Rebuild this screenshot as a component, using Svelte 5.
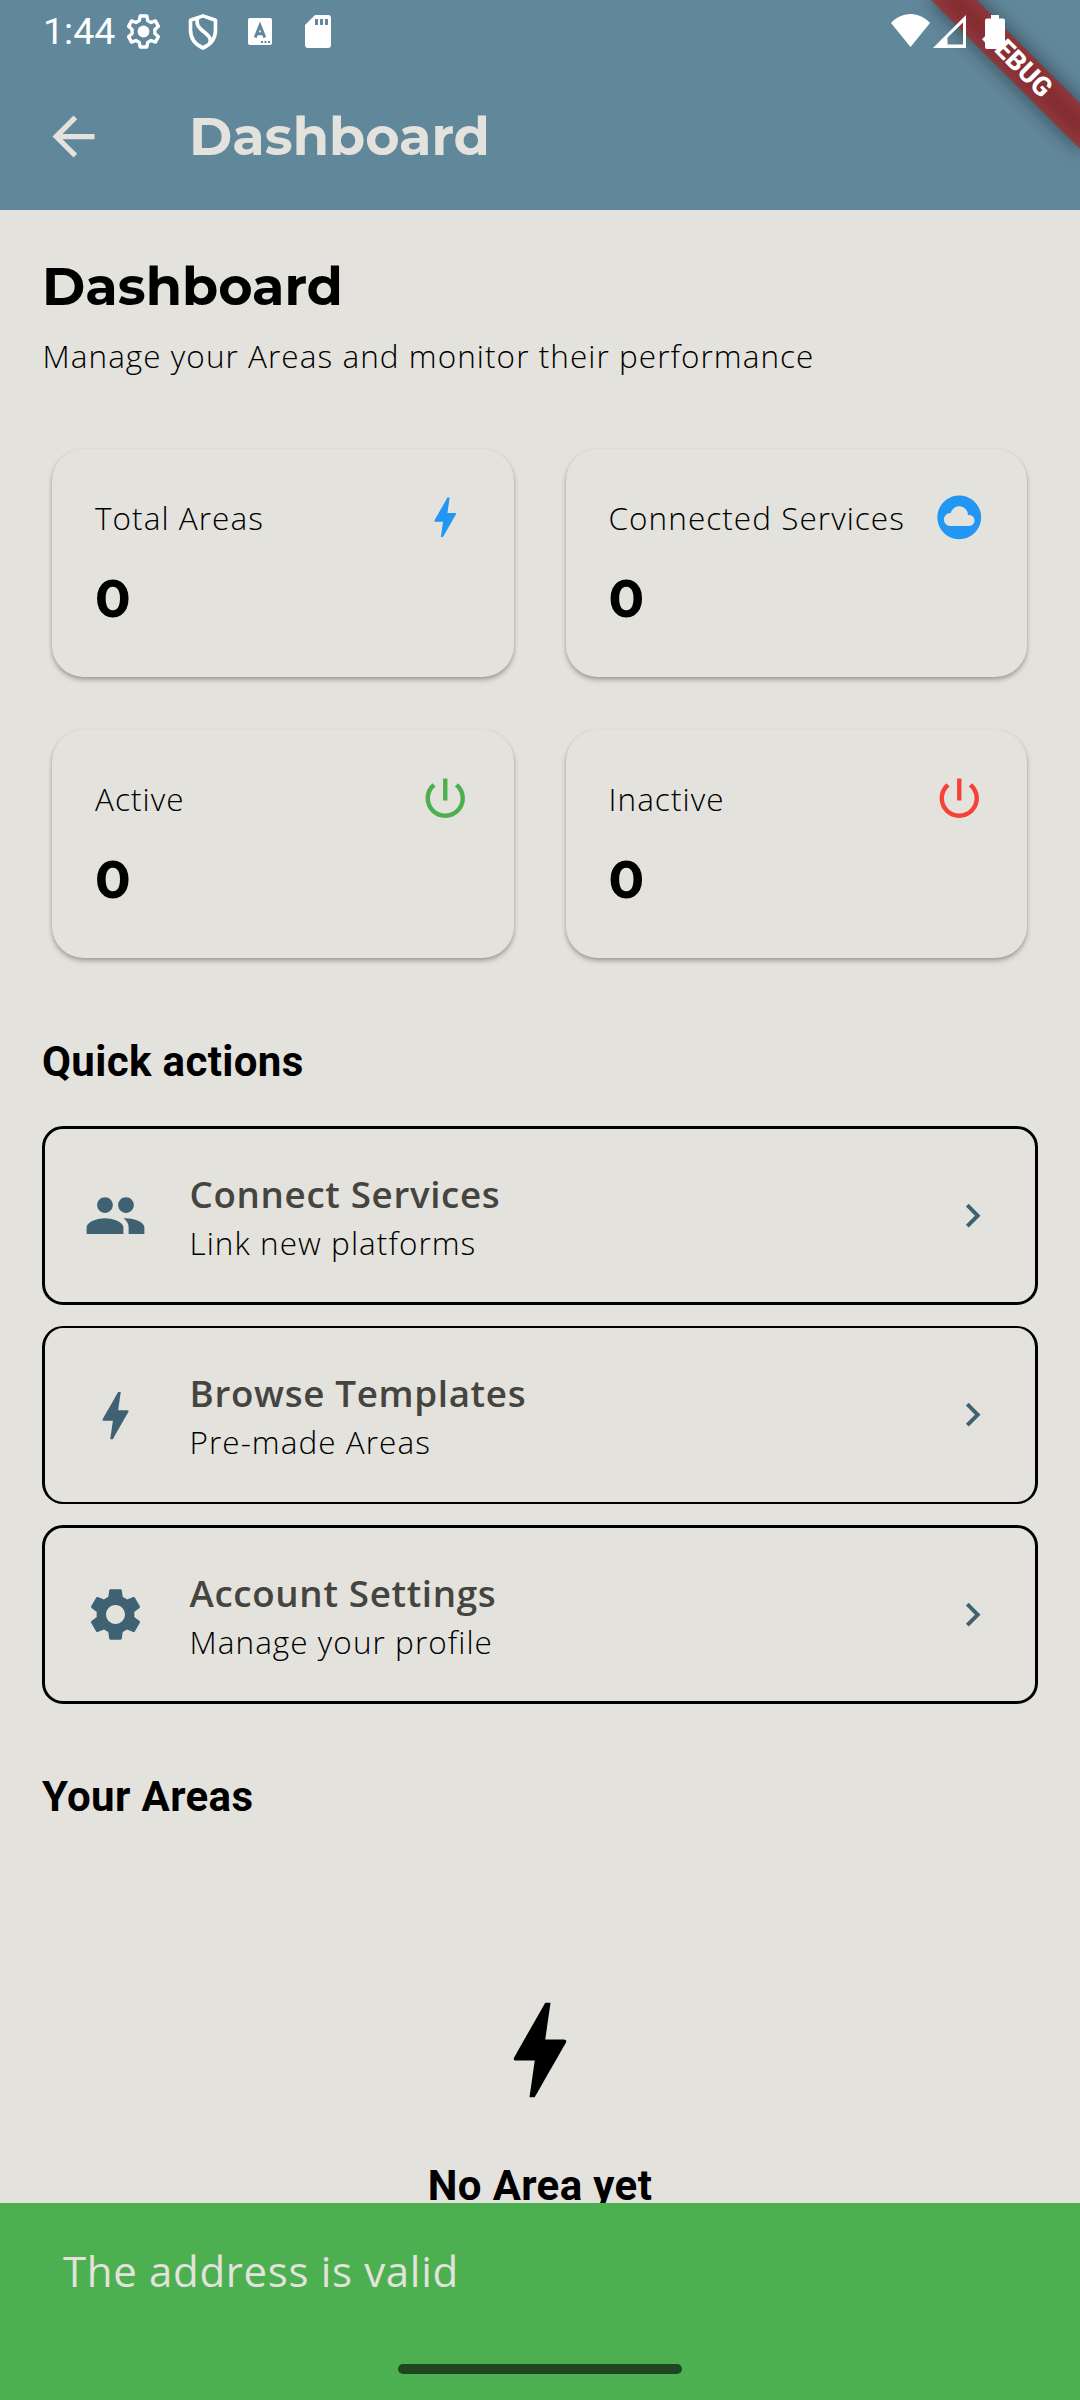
<script>
  const bolt =
    'M11 21h-1l1-7H7.5c-.58 0-.57-.32-.38-.66.19-.34.05-.08.07-.12C8.48 10.94 10.42 7.54 13 3h1l-1 7h3.5c.49 0 .56.33.47.51l-.07.15C12.96 17.55 11 21 11 21z';
  const cloud =
    'M12 2C6.48 2 2 6.48 2 12s4.48 10 10 10 10-4.480 10-10S17.52 2 12 2zm4.500 14H8c-1.660 0-3-1.340-3-3s1.340-3 3-3l.14.01C8.580 8.280 10.130 7 12 7c2.210 0 4 1.790 4 4h.5c1.380 0 2.500 1.120 2.500 2.500S17.880 16 16.500 16z';
  const power =
    'M13 3h-2v10h2V3zm4.830 2.170l-1.420 1.420C17.990 7.860 19 9.810 19 12c0 3.870-3.130 7-7 7s-7-3.130-7-7c0-2.190 1.010-4.140 2.580-5.420L6.170 5.170C4.230 6.820 3 9.260 3 12c0 4.970 4.030 9 9 9s9-4.030 9-9c0-2.740-1.230-5.180-3.170-6.830z';
  const people =
    'M16 11c1.660 0 2.990-1.340 2.990-3S17.660 5 16 5c-1.660 0-3 1.340-3 3s1.340 3 3 3zm-8 0c1.660 0 2.990-1.340 2.990-3S9.660 5 8 5C6.340 5 5 6.340 5 8s1.340 3 3 3zm0 2c-2.330 0-7 1.170-7 3.500V19h14v-2.500c0-2.330-4.670-3.500-7-3.500zm8 0c-.29 0-.62.02-.97.05 1.160.84 1.970 1.970 1.970 3.450V19h6v-2.500c0-2.330-4.670-3.500-7-3.500z';
  const gear =
    'M19.14 12.94c.04-.3.06-.61.06-.94 0-.32-.02-.64-.07-.94l2.030-1.580c.18-.14.23-.41.12-.61l-1.920-3.320c-.12-.22-.37-.29-.59-.22l-2.390.96c-.5-.38-1.030-.7-1.620-.94l-.36-2.540c-.04-.24-.24-.41-.48-.41h-3.840c-.24 0-.43.17-.47.41l-.36 2.540c-.59.24-1.130.57-1.620.94l-2.390-.96c-.22-.08-.47 0-.59.22L2.740 8.870c-.12.21-.08.47.12.61l2.030 1.580c-.05.3-.09.63-.09.94s.02.64.07.94l-2.030 1.580c-.18.14-.23.41-.12.61l1.920 3.320c.12.22.37.29.59.22l2.390-.96c.5.38 1.030.7 1.620.94l.36 2.540c.05.24.24.41.48.41h3.840c.24 0 .44-.17.47-.41l.36-2.540c.59-.24 1.130-.56 1.620-.94l2.390.96c.22.08.47 0 .59-.22l1.920-3.320c.12-.22.07-.47-.12-.61l-2.010-1.580zM12 15.600c-1.980 0-3.600-1.620-3.600-3.600s1.620-3.600 3.600-3.600 3.600 1.620 3.600 3.600-1.620 3.600-3.600 3.600z';

  const stats = [
    { label: 'Total Areas', value: 0, icon: bolt, tone: 'blue' },
    { label: 'Connected Services', value: 0, icon: cloud, tone: 'blue' },
    { label: 'Active', value: 0, icon: power, tone: 'green' },
    { label: 'Inactive', value: 0, icon: power, tone: 'red' },
  ];

  const actions = [
    { title: 'Connect Services', text: 'Link new platforms', icon: people },
    { title: 'Browse Templates', text: 'Pre-made Areas', icon: bolt },
    { title: 'Account Settings', text: 'Manage your profile', icon: gear },
  ];
</script>

<div class="screen">
  <header>
    <div class="status">
      <span class="time">1:44</span>
      <svg class="s-gear" viewBox="0 0 33 35">
        <path d="M13.200 2h6.600l.9 4.600 3.300 1.900 4.400-1.600 3 5.400-3.500 3.100v4.200l3.500 3.100-3 5.400-4.400-1.600-3.300 1.900-.9 4.600h-6.600l-.9-4.600L9 26.500l-4.400 1.600-3-5.400 3.500-3.100v-4.200l-3.500-3.100 3-5.400L9 8.500l3.300-1.900z" fill="none" stroke="#fff" stroke-width="3.400" stroke-linejoin="round" />
        <circle cx="16.500" cy="17.500" r="5.900" fill="#fff" />
      </svg>
      <svg class="s-shield" viewBox="0 0 30 36">
        <path d="M15 1.900L27.500 6.300V16c0 8.500-4.500 14.500-12.500 18C7 30.500 2.500 24.500 2.500 16V6.300z" fill="none" stroke="#fff" stroke-width="3.600" stroke-linejoin="round" />
        <path d="M9.500 4c-1.500 7 1 9.500 6 13.500s8 6.500 6.500 12" fill="none" stroke="#fff" stroke-width="3.600" />
      </svg>
      <svg class="s-lang" viewBox="0 0 24 27">
        <rect width="24" height="27" rx="2" fill="#fff" />
        <path d="M7.200 19.500L12 7.500l4.800 12M9 15.800h6" fill="none" stroke="#61879b" stroke-width="3" />
        <path d="M13 23h2v2h-2zM16.500 23h2v2h-2zM20 23h2v2h-2z" fill="#61879b" />
      </svg>
      <svg class="s-sd" viewBox="0 0 26 33">
        <path d="M10 0h13a3 3 0 0 1 3 3v27a3 3 0 0 1-3 3H3a3 3 0 0 1-3-3V10z" fill="#fff" />
        <path d="M10 4h3v6h-3zM15 4h3v6h-3zM20 4h3v6h-3z" fill="#61879b" />
      </svg>
      <span class="spacer"></span>
      <svg class="s-wifi" viewBox="0 0 39 33">
        <path d="M0 9C5 3.500 12 0 19.500 0S34 3.500 39 9L19.500 33z" fill="#fff" />
      </svg>
      <svg class="s-signal" viewBox="0 0 33 33">
        <path d="M33 0v33H0zM30 7.500L14.500 22.500V29.500H30z" fill="#fff" fill-rule="evenodd" />
      </svg>
      <svg class="s-battery" viewBox="0 0 20 34">
        <path d="M6 0h8v3.500h4a2 2 0 0 1 2 2V32a2 2 0 0 1-2 2H2a2 2 0 0 1-2-2V5.500a2 2 0 0 1 2-2h4z" fill="#fff" />
      </svg>
    </div>
    <div class="appbar">
      <svg class="back" viewBox="0 0 24 24"><path d="M20 11H7.830l5.590-5.590L12 4l-8 8 8 8 1.410-1.410L7.830 13H20v-2z" /></svg>
      <span class="bar-title">Dashboard</span>
    </div>
    <div class="debug-shadow"></div>
    <div class="debug">DEBUG</div>
  </header>

  <main>
    <h1>Dashboard</h1>
    <p class="lead">Manage your Areas and monitor their performance</p>

    <section class="stats">
      {#each stats as s}
        <article class="stat">
          <div class="stat-head">
            <span class="small">{s.label}</span>
            <svg class={s.tone} viewBox="0 0 24 24"><path d={s.icon} /></svg>
          </div>
          <div class="value">{s.value}</div>
        </article>
      {/each}
    </section>

    <h2 class="quick">Quick actions</h2>
    <section class="actions">
      {#each actions as a}
        <article class="action">
          <svg class="lead-icon" viewBox="0 0 24 24"><path d={a.icon} /></svg>
          <div class="words">
            <div class="action-title">{a.title}</div>
            <div class="small">{a.text}</div>
          </div>
          <svg class="chevron" viewBox="0 0 24 24"><path d="M10 6L8.590 7.410 13.170 12l-4.580 4.590L10 18l6-6z" /></svg>
        </article>
      {/each}
    </section>

    <h2 class="areas">Your Areas</h2>
    <section class="empty">
      <svg viewBox="0 0 24 24"><path d={bolt} /></svg>
      <h2>No Area yet</h2>
    </section>
  </main>

  <div class="snackbar">
    <span>The address is valid</span>
    <div class="handle"></div>
  </div>
</div>

<style>
  :global(body) {
    margin: 0;
    background: #e3e2dd;
  }
  .screen {
    position: relative;
    width: 1080px;
    height: 2400px;
    overflow: hidden;
    background: #e3e2dd;
    color: #000;
    font-family: 'Open Sans', sans-serif;
  }
  svg {
    display: block;
    flex: none;
  }
  h1,
  h2,
  p {
    margin: 0;
  }
  header {
    position: relative;
    height: 210px;
    overflow: hidden;
    background: #61879b;
  }
  .status {
    position: relative;
    z-index: 3;
    display: flex;
    align-items: center;
    height: 63px;
    padding: 0 75px 0 43px;
    box-sizing: border-box;
  }
  .time {
    width: 84px;
    font: 400 37.500px/63px Roboto, sans-serif;
    color: #fff;
  }
  .s-gear { width: 33px; height: 35px; }
  .s-shield { width: 30px; height: 36px; margin-left: 27.500px; }
  .s-lang { width: 24px; height: 27px; margin-left: 30.500px; }
  .s-sd { width: 26px; height: 33px; margin-left: 33px; }
  .spacer { flex: 1; }
  .s-wifi { width: 39px; height: 33px; margin-bottom: 2px; }
  .s-signal { width: 33px; height: 33px; margin-left: 3px; }
  .s-battery { width: 20px; height: 34px; margin-left: 19px; }
  .appbar {
    display: flex;
    align-items: center;
    height: 147px;
    padding: 0 42px;
  }
  .back {
    width: 63px;
    height: 63px;
    fill: #e3e2dd;
  }
  .bar-title {
    margin: 0 0 2px 84px;
    color: #e3e2dd;
  }
  .bar-title,
  h1,
  .value {
    font: 700 52.500px/64px Montserrat, Inter, sans-serif;
  }
  /* Diagonal ribbon across the top-right corner */
  .debug,
  .debug-shadow {
    position: absolute;
    left: 912px;
    top: 47px;
    width: 210px;
    height: 31.500px;
    transform: rotate(45deg);
  }
  .debug-shadow {
    background: rgba(0, 0, 0, 0.5);
    filter: blur(10px);
  }
  .debug {
    background: rgba(183, 28, 28, 0.627);
    color: #fff;
    text-align: center;
    font: 800 26.800px/31.500px Roboto, sans-serif;
  }
  main {
    padding: 44px 42px 0;
  }
  .lead {
    margin: 16px 0 0 0.500px;
  }
  .lead,
  .small {
    font-size: 31.500px;
    line-height: 43px;
    font-weight: 300;
    letter-spacing: 1.050px;
    white-space: nowrap;
  }
  .stats {
    display: grid;
    grid-template-columns: 1fr 1fr;
    grid-auto-rows: 228px;
    gap: 53px 52px;
    margin-top: 72px;
    padding: 0 11px 0 10px;
  }
  .stat {
    box-sizing: border-box;
    padding: 42px 42px 42px 43px;
    border-radius: 31.500px;
    background: #e3e2dd;
    box-shadow:
      0 3px 5px rgba(0, 0, 0, 0.27),
      0 1px 3px rgba(0, 0, 0, 0.08);
  }
  .stat-head {
    display: flex;
    align-items: center;
    justify-content: space-between;
    height: 52.500px;
  }
  .stat-head svg {
    width: 52.500px;
    height: 52.500px;
    margin-top: -1px;
  }
  .blue { fill: #2196f3; }
  .green { fill: #4caf50; }
  .red { fill: #f44336; }
  .value {
    margin-top: 22px;
  }
  h2 {
    font: 700 42px/50px Roboto, sans-serif;
    letter-spacing: 0.370px;
  }
  .quick {
    margin-top: 79px;
  }
  .actions {
    display: grid;
    grid-template-rows: 179px 178px 179px;
    gap: 21px;
    margin-top: 39px;
  }
  .action {
    display: flex;
    align-items: center;
    box-sizing: border-box;
    padding: 0 39px;
    border: 3px solid #000;
    border-radius: 21px;
  }
  .action:nth-child(2) {
    border-width: 2px 3px;
  }
  .lead-icon {
    width: 63px;
    height: 63px;
    fill: #3e6272;
  }
  .words {
    display: grid;
    gap: 2px;
    flex: 1;
    margin-left: 42.500px;
    padding-top: 1px;
  }
  .action-title {
    font-size: 36.750px;
    line-height: 50px;
    font-weight: 600;
    letter-spacing: 0.660px;
    color: #45443f;
  }
  .chevron {
    width: 47.250px;
    height: 47.250px;
    fill: #3e6272;
  }
  .areas {
    margin-top: 68px;
  }
  .empty {
    display: flex;
    flex-direction: column;
    align-items: center;
    gap: 48px;
    margin-top: 165px;
  }
  .empty svg {
    width: 126px;
    height: 126px;
  }
  .snackbar {
    position: absolute;
    left: 0;
    right: 0;
    bottom: 0;
    display: flex;
    flex-direction: column;
    justify-content: space-between;
    height: 197px;
    padding: 39px 63px 26px;
    box-sizing: border-box;
    background: #4caf50;
    color: #e3e2dd;
    font-size: 42px;
    line-height: 57px;
    font-weight: 400;
    letter-spacing: 0.660px;
  }
  .handle {
    align-self: center;
    width: 284px;
    height: 10px;
    border-radius: 5px;
    background: #1f4522;
  }
</style>
